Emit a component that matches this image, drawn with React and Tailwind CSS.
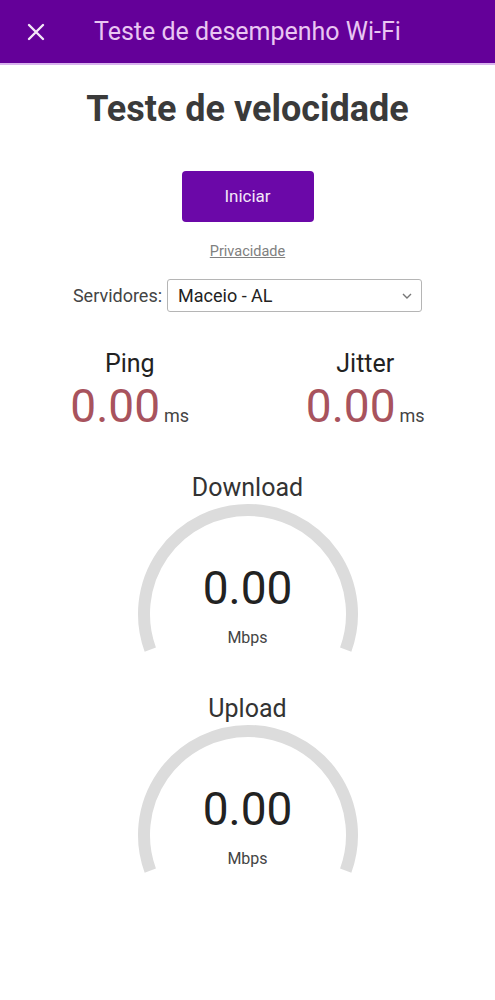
import React from "react";

function Gauge({ label, className }) {
  return (
    <div className={"flex flex-col items-center " + className}>
      <div className="text-[25px] leading-[28px] text-[#333]">{label}</div>
      <div className="relative -mt-[8px] h-[170px] w-[240px]">
        <svg width="240" height="170" viewBox="0 0 240 170" className="absolute left-0 top-0">
          <path
            d="M 22.3 155.6 A 104 104 0 1 1 217.7 155.6"
            fill="none"
            stroke="#dcdcdc"
            strokeWidth="12"
          />
        </svg>
        <div className="absolute left-0 right-0 top-[68px] text-center text-[46px] leading-[52px] text-[#222]">
          0.00
        </div>
        <div className="absolute left-0 right-0 top-[134px] text-center text-[16px] leading-[20px] text-[#444]">
          Mbps
        </div>
      </div>
    </div>
  );
}

function Metric({ label }) {
  return (
    <div className="flex flex-col items-center">
      <div className="text-[25px] leading-[28px] text-[#222]">{label}</div>
      <div className="flex items-baseline text-[#a8535d]">
        <span className="text-[46px] leading-[56px]">0.00</span>
        <span className="ml-[4px] text-[18px] text-[#444]">ms</span>
      </div>
    </div>
  );
}

export default function App() {
  return (
    <div className="min-h-[1000px] w-[495px] bg-white font-['Roboto',sans-serif]">
      <header className="flex h-[65px] items-center border-b-2 border-[#d9b3ee] bg-[#640099]">
        <svg width="20" height="20" viewBox="0 0 20 20" className="ml-[26px]">
          <path d="M3 3 L17 17 M17 3 L3 17" stroke="#f3e6f8" strokeWidth="2.4" strokeLinecap="round" />
        </svg>
        <div className="ml-[48px] text-[25px] text-[#e9c6f2]">Teste de desempenho Wi-Fi</div>
      </header>

      <h1 className="mt-[24px] text-center text-[36px] font-bold leading-[40px] text-[#3a3a3a]">
        Teste de velocidade
      </h1>

      <div className="mt-[42px] flex justify-center">
        <button className="h-[51px] w-[132px] rounded-[4px] bg-[#6b08a8] text-[17px] text-[#f3e6f8]">
          Iniciar
        </button>
      </div>

      <div className="mt-[22px] text-center text-[14.5px] leading-[16px] text-[#808080] underline">
        Privacidade
      </div>

      <div className="mt-[19px] flex items-center justify-center">
        <span className="text-[18px] text-[#444]">Servidores:</span>
        <div className="ml-[5px] flex h-[33px] w-[255px] items-center justify-between rounded-[3px] border border-[#b5b5b5] pl-[10px] pr-[8px]">
          <span className="text-[18px] text-[#222]">Maceio - AL</span>
          <svg width="12" height="8" viewBox="0 0 12 8">
            <path d="M2 2 L6 6 L10 2" fill="none" stroke="#777" strokeWidth="1.4" />
          </svg>
        </div>
      </div>

      <div className="mt-[38px] grid grid-cols-2 px-[12px]">
        <Metric label="Ping" />
        <Metric label="Jitter" />
      </div>

      <Gauge label="Download" className="mt-[40px]" />
      <Gauge label="Upload" className="mt-[31px]" />
    </div>
  );
}
